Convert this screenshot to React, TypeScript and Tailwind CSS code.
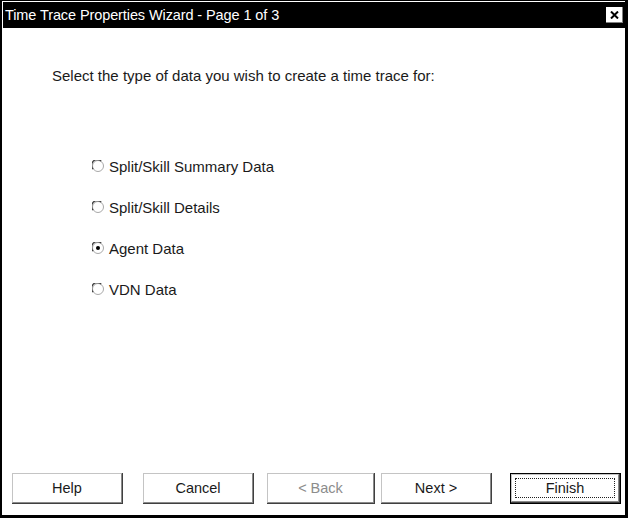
import React from "react";

const font = { fontFamily: '"Liberation Sans", Arial, sans-serif' };

function Radio({ checked }: { checked?: boolean }) {
  return (
    <svg width="12" height="12" viewBox="0 0 12 12" className="shrink-0">
      <circle cx="6" cy="6" r="5.5" fill="white" stroke="#a8a8a8" strokeWidth="1" />
      <path d="M1.2 9.2 A5.5 5.5 0 0 1 9.2 1.2" fill="none" stroke="#404040" strokeWidth="1.2" />
      {checked && <circle cx="6" cy="6" r="2" fill="#000" />}
    </svg>
  );
}

function Option({ label, checked }: { label: string; checked?: boolean }) {
  return (
    <div className="flex items-center h-[18px] gap-[5px]">
      <Radio checked={checked} />
      <span className="text-[15px] text-[#1a1a1a] leading-none">{label}</span>
    </div>
  );
}

function Btn({
  label,
  disabled,
  def,
  w = "w-[111px]",
}: {
  label: string;
  disabled?: boolean;
  def?: boolean;
  w?: string;
}) {
  const inner = (
    <div className="h-full w-full border-r border-b border-[#404040]">
      <div className="h-full w-full border-t border-l border-[#c4c4c4] border-r border-b border-r-[#8a8a8a] border-b-[#8a8a8a] flex items-center justify-center relative">
        {def && (
          <div className="absolute inset-[3px] border border-dotted border-[#202020]" />
        )}
        <span
          className={
            "text-[14.5px] leading-none " + (disabled ? "text-[#8c8c8c]" : "text-[#1a1a1a]")
          }
        >
          {label}
        </span>
      </div>
    </div>
  );
  return (
    <div className={w + " h-[31px] " + (def ? "border border-black" : "")}>{inner}</div>
  );
}

export default function App() {
  return (
    <div
      className="w-[628px] h-[518px] bg-black flex flex-col pt-[1px] pl-[2px] pr-[3px] pb-[3px]"
      style={font}
    >
      <div className="h-[27px] shrink-0 border-t border-l border-white bg-black flex items-center justify-between pl-[2px] pr-[2px]">
        <span className="text-white text-[14.5px] leading-none tracking-[-0.1px]">
          Time Trace Properties Wizard - Page 1 of 3
        </span>
        <div className="w-[17px] h-[16px] bg-white border-r border-b border-[#808080] flex items-center justify-center">
          <svg width="9" height="8" viewBox="0 0 9 8">
            <path d="M1 0.5 L8 7.5 M8 0.5 L1 7.5" stroke="#000" strokeWidth="2" />
          </svg>
        </div>
      </div>
      <div className="flex-1 bg-white flex flex-col">
        <div className="pl-[50px] pt-[39px] text-[15px] text-[#1a1a1a] leading-[18px]">
          Select the type of data you wish to create a time trace for:
        </div>
        <div className="pl-[90px] pt-[72px] flex flex-col gap-[23px]">
          <Option label="Split/Skill Summary Data" />
          <Option label="Split/Skill Details" />
          <Option label="Agent Data" checked />
          <Option label="VDN Data" />
        </div>
        <div className="flex-1" />
        <div className="flex items-start pl-[10px] pb-[11px]">
          <Btn label="Help" />
          <div className="w-[20px]" />
          <Btn label="Cancel" />
          <div className="w-[13px]" />
          <Btn label="< Back" disabled w="w-[108px]" />
          <div className="w-[6px]" />
          <Btn label="Next >" />
          <div className="w-[18px]" />
          <Btn label="Finish" def />
        </div>
      </div>
    </div>
  );
}
